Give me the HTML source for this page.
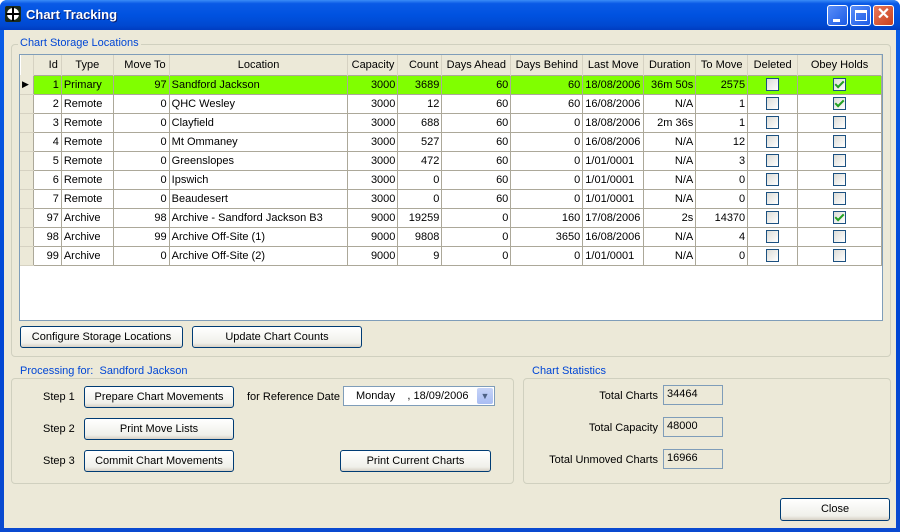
<!DOCTYPE html>
<html><head><meta charset="utf-8"><style>
*{box-sizing:border-box;margin:0;padding:0}
body{width:900px;height:532px;overflow:hidden;font-family:Tahoma,"Liberation Sans",sans-serif;font-size:11px;color:#000;background:#fff}
.win{position:absolute;left:0;top:0;width:900px;height:532px;background:linear-gradient(#0a5fe8,#0046d4 60%,#0a4ad0);border-radius:7px 7px 0 0}
.title{position:absolute;left:0;top:0;width:900px;height:30px;background:linear-gradient(#3b8cf7 0,#0a5ae6 12%,#0052e0 50%,#0048d0 85%,#003cc0);border-radius:7px 7px 0 0}
.title span{position:absolute;left:26px;top:7px;color:#fff;font-weight:bold;font-size:13px;text-shadow:1px 1px #0a1e6e}
.client{position:absolute;left:4px;top:30px;width:892px;height:498px;background:#ECE9D8}
.a{position:absolute}
.gb{position:absolute;border:1px solid #d0d0bf;border-radius:4px}
.gl{position:absolute;background:#ECE9D8;color:#0046d5;padding:0 2px;font-size:11px}
.btn{position:absolute;border:1px solid #003c74;border-radius:3px;background:linear-gradient(#fff,#f0f0ea 80%,#d6d0c5);text-align:center;font-size:11px}
table{border-collapse:collapse;table-layout:fixed;position:absolute;left:0;top:0}
td{height:19px;border:1px solid #aca899;padding:0 2px;white-space:nowrap;overflow:hidden;text-align:right;font-size:11px}
tr.h td{background:#ECE9D8;border:none;border-right:1px solid #d6d2c2;text-align:center;height:20px;padding:0 3px}
td.l{text-align:left}
td.rh{background:#ECE9D8;border-color:#ECE9D8 #aca899 #d6d2c2 #ECE9D8}
td.c{text-align:center}
tr.sel td{background:#80ff00}
.cb{display:inline-block;width:13px;height:13px;border:1px solid #1c5180;background:linear-gradient(135deg,#dcdcd7,#fff);vertical-align:middle;position:relative}
.cb.k::after{content:"";position:absolute;left:3px;top:0px;width:3px;height:7px;border:solid #21a121;border-width:0 2px 2px 0;transform:rotate(45deg)}
.tb{position:absolute;border:1px solid #7f9db9;background:#ECE9D8;padding:2px 3px;font-size:11px}
</style></head><body>
<div class="win">
<div class="title">
<div class="a" style="left:5px;top:6px;width:16px;height:16px;background:#1a2a1a;border-radius:2px"><div class="a" style="left:2px;top:2px;width:12px;height:12px;border-radius:50%;background:#fff"></div><div class="a" style="left:7px;top:1px;width:2px;height:14px;background:#000"></div><div class="a" style="left:1px;top:7px;width:14px;height:2px;background:#000"></div></div>
<span>Chart Tracking</span>
<div class="a" style="left:827px;top:5px;width:21px;height:21px;border:1px solid #fff;border-radius:3px;background:linear-gradient(135deg,#5a8ef8,#1b5be6)"><div class="a" style="left:5px;top:13px;width:7px;height:3px;background:#fff"></div></div>
<div class="a" style="left:850px;top:5px;width:21px;height:21px;border:1px solid #fff;border-radius:3px;background:linear-gradient(135deg,#5a8ef8,#1b5be6)"><div class="a" style="left:4px;top:4px;width:12px;height:11px;border:1px solid #fff;border-top-width:3px"></div></div>
<div class="a" style="left:873px;top:5px;width:21px;height:21px;border:1px solid #fff;border-radius:3px;background:linear-gradient(135deg,#e8785a,#c8401e);color:#fff;font-weight:bold;font-size:16px;line-height:18px;text-align:center">✕</div>
</div>
<div class="client">
<div class="gb" style="left:7px;top:14px;width:880px;height:313px"></div>
<div class="gl" style="left:14px;top:7px">Chart Storage Locations</div>
<div class="a" style="left:15px;top:24px;width:864px;height:267px;border:1px solid #7f9db9;background:#fff;overflow:hidden">
<table>
<colgroup><col style="width:13px"><col style="width:28px"><col style="width:52px"><col style="width:56px"><col style="width:179px"><col style="width:50px"><col style="width:44px"><col style="width:69px"><col style="width:72px"><col style="width:61px"><col style="width:52px"><col style="width:52px"><col style="width:50px"><col style="width:84px"></colgroup>
<tr class="h"><td></td><td style="text-align:right">Id</td><td class="l">Type</td><td style="text-align:right">Move To</td><td class="l">Location</td><td style="text-align:right">Capacity</td><td style="text-align:right">Count</td><td>Days Ahead</td><td>Days Behind</td><td>Last Move</td><td>Duration</td><td>To Move</td><td>Deleted</td><td>Obey Holds</td></tr>
<tr class="sel"><td class="rh" style="background:#ECE9D8;text-align:left;padding:0 0 0 1px;font-size:9px">▶</td><td>1</td><td class="l">Primary</td><td>97</td><td class="l">Sandford Jackson</td><td>3000</td><td>3689</td><td>60</td><td>60</td><td class="l">18/08/2006</td><td>36m 50s</td><td>2575</td><td class="c"><span class="cb"></span></td><td class="c"><span class="cb k"></span></td></tr>
<tr><td class="rh"></td><td>2</td><td class="l">Remote</td><td>0</td><td class="l">QHC Wesley</td><td>3000</td><td>12</td><td>60</td><td>60</td><td class="l">16/08/2006</td><td>N/A</td><td>1</td><td class="c"><span class="cb"></span></td><td class="c"><span class="cb k"></span></td></tr>
<tr><td class="rh"></td><td>3</td><td class="l">Remote</td><td>0</td><td class="l">Clayfield</td><td>3000</td><td>688</td><td>60</td><td>0</td><td class="l">18/08/2006</td><td>2m 36s</td><td>1</td><td class="c"><span class="cb"></span></td><td class="c"><span class="cb"></span></td></tr>
<tr><td class="rh"></td><td>4</td><td class="l">Remote</td><td>0</td><td class="l">Mt Ommaney</td><td>3000</td><td>527</td><td>60</td><td>0</td><td class="l">16/08/2006</td><td>N/A</td><td>12</td><td class="c"><span class="cb"></span></td><td class="c"><span class="cb"></span></td></tr>
<tr><td class="rh"></td><td>5</td><td class="l">Remote</td><td>0</td><td class="l">Greenslopes</td><td>3000</td><td>472</td><td>60</td><td>0</td><td class="l">1/01/0001</td><td>N/A</td><td>3</td><td class="c"><span class="cb"></span></td><td class="c"><span class="cb"></span></td></tr>
<tr><td class="rh"></td><td>6</td><td class="l">Remote</td><td>0</td><td class="l">Ipswich</td><td>3000</td><td>0</td><td>60</td><td>0</td><td class="l">1/01/0001</td><td>N/A</td><td>0</td><td class="c"><span class="cb"></span></td><td class="c"><span class="cb"></span></td></tr>
<tr><td class="rh"></td><td>7</td><td class="l">Remote</td><td>0</td><td class="l">Beaudesert</td><td>3000</td><td>0</td><td>60</td><td>0</td><td class="l">1/01/0001</td><td>N/A</td><td>0</td><td class="c"><span class="cb"></span></td><td class="c"><span class="cb"></span></td></tr>
<tr><td class="rh"></td><td>97</td><td class="l">Archive</td><td>98</td><td class="l">Archive - Sandford Jackson B3</td><td>9000</td><td>19259</td><td>0</td><td>160</td><td class="l">17/08/2006</td><td>2s</td><td>14370</td><td class="c"><span class="cb"></span></td><td class="c"><span class="cb k"></span></td></tr>
<tr><td class="rh"></td><td>98</td><td class="l">Archive</td><td>99</td><td class="l">Archive Off-Site (1)</td><td>9000</td><td>9808</td><td>0</td><td>3650</td><td class="l">16/08/2006</td><td>N/A</td><td>4</td><td class="c"><span class="cb"></span></td><td class="c"><span class="cb"></span></td></tr>
<tr><td class="rh"></td><td>99</td><td class="l">Archive</td><td>0</td><td class="l">Archive Off-Site (2)</td><td>9000</td><td>9</td><td>0</td><td>0</td><td class="l">1/01/0001</td><td>N/A</td><td>0</td><td class="c"><span class="cb"></span></td><td class="c"><span class="cb"></span></td></tr>
</table></div>
<div class="btn" style="left:16px;top:296px;width:163px;height:22px;line-height:20px">Configure Storage Locations</div>
<div class="btn" style="left:188px;top:296px;width:170px;height:22px;line-height:20px">Update Chart Counts</div>

<div class="gb" style="left:7px;top:348px;width:503px;height:106px"></div>
<div class="gl" style="left:14px;top:335px">Processing for:&nbsp; Sandford Jackson</div>
<div class="a" style="left:39px;top:361px">Step 1</div>
<div class="a" style="left:39px;top:393px">Step 2</div>
<div class="a" style="left:39px;top:425px">Step 3</div>
<div class="btn" style="left:80px;top:356px;width:150px;height:22px;line-height:20px">Prepare Chart Movements</div>
<div class="btn" style="left:80px;top:388px;width:150px;height:22px;line-height:20px">Print Move Lists</div>
<div class="btn" style="left:80px;top:420px;width:150px;height:22px;line-height:20px">Commit Chart Movements</div>
<div class="a" style="left:243px;top:361px">for Reference Date</div>
<div class="a" style="left:339px;top:356px;width:152px;height:20px;border:1px solid #7f9db9;background:#fff"><span class="a" style="left:12px;top:3px">Monday &nbsp;&nbsp;&nbsp;, 18/09/2006</span><div class="a" style="right:1px;top:1px;width:16px;height:16px;border-radius:2px;background:linear-gradient(#c6d3f7,#a9bdf3);color:#4d6185;font-size:9px;text-align:center;line-height:16px">▼</div></div>
<div class="btn" style="left:336px;top:420px;width:151px;height:22px;line-height:20px">Print Current Charts</div>

<div class="gb" style="left:519px;top:348px;width:368px;height:106px"></div>
<div class="gl" style="left:526px;top:335px">Chart Statistics</div>
<div class="a" style="left:520px;top:360px;width:134px;text-align:right">Total Charts</div>
<div class="a" style="left:520px;top:392px;width:134px;text-align:right">Total Capacity</div>
<div class="a" style="left:520px;top:424px;width:134px;text-align:right">Total Unmoved Charts</div>
<div class="tb" style="left:659px;top:355px;width:60px;height:20px">34464</div>
<div class="tb" style="left:659px;top:387px;width:60px;height:20px">48000</div>
<div class="tb" style="left:659px;top:419px;width:60px;height:20px">16966</div>
<div class="btn" style="left:776px;top:468px;width:110px;height:23px;line-height:21px">Close</div>
</div>
</div>
</body></html>
